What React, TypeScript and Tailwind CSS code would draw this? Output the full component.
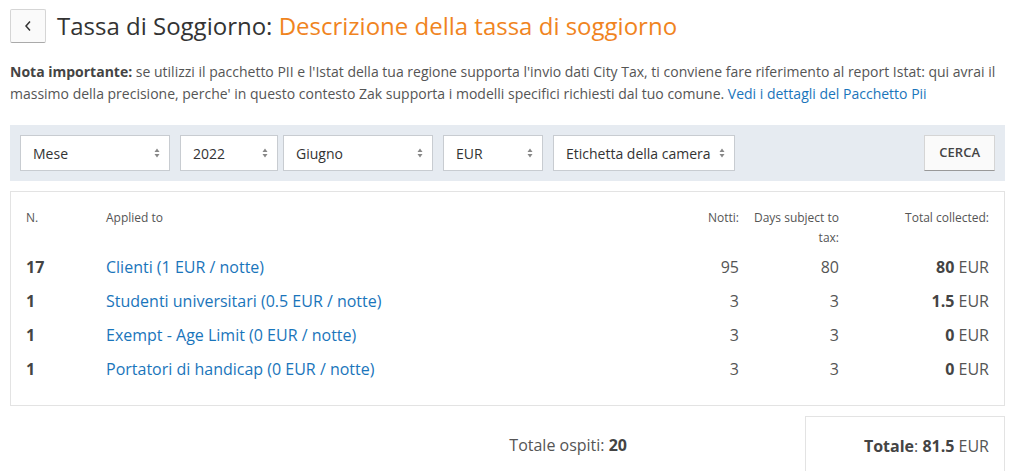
import React from 'react';

const rows = [
  { n: 17, label: 'Clienti (1 EUR / notte)', notti: 95, days: 80, total: '80' },
  { n: 1, label: 'Studenti universitari (0.5 EUR / notte)', notti: 3, days: 3, total: '1.5' },
  { n: 1, label: 'Exempt - Age Limit (0 EUR / notte)', notti: 3, days: 3, total: '0' },
  { n: 1, label: 'Portatori di handicap (0 EUR / notte)', notti: 3, days: 3, total: '0' },
];

function Arrows() {
  return (
    <svg width="6" height="10" viewBox="0 0 6 10" className="shrink-0">
      <path d="M3 0.5 L5.5 4 H0.5 Z" fill="#888" />
      <path d="M3 9.5 L5.5 6 H0.5 Z" fill="#888" />
    </svg>
  );
}

function FakeSelect({ value, className = '' }: { value: string; className?: string }) {
  return (
    <div className={`h-9 bg-white border border-[#c8ccd1] flex items-center justify-between pl-3 pr-[9px] text-[14px] text-[#333] ${className}`}>
      <span>{value}</span>
      <Arrows />
    </div>
  );
}

export default function App() {
  return (
    <div className="w-[1015px] h-[471px] overflow-hidden bg-white px-[10px] font-['Open_Sans',sans-serif] text-[#333]">
      {/* title */}
      <div className="flex items-center gap-[11px] pt-[9px]">
        <button className="w-9 h-[34px] flex items-center justify-center border border-[#d5d5d5] border-b-[#aaa] bg-[#fafafa] rounded-[2px] text-[#333]">
          <svg width="8" height="12" viewBox="0 0 8 12">
            <path d="M6 1.5 L2 6 L6 10.5" stroke="#333" strokeWidth="1.5" fill="none" />
          </svg>
        </button>
        <h1 className="text-[24px] leading-[34px] font-normal text-[#333]">
          Tassa di Soggiorno: <span className="text-[#f0841e]">Descrizione della tassa di soggiorno</span>
        </h1>
      </div>

      {/* note */}
      <p className="mt-[18px] text-[14px] leading-[22px] text-[#555]">
        <b className="font-bold text-[#444]">Nota importante:</b> se utilizzi il pacchetto PII e l'Istat della tua regione supporta l'invio dati City Tax, ti conviene fare riferimento al report Istat: qui avrai il massimo della precisione, perche' in questo contesto Zak supporta i modelli specifici richiesti dal tuo comune.{' '}
        <a className="text-[#1a75bb]">Vedi i dettagli del Pacchetto Pii</a>
      </p>

      {/* filters */}
      <div className="mt-[20px] h-[56px] bg-[#e6ebf1] flex items-center px-[10px]">
        <FakeSelect value="Mese" className="w-[150px]" />
        <FakeSelect value="2022" className="w-[98px] ml-[10px]" />
        <FakeSelect value="Giugno" className="w-[150px] ml-[5px]" />
        <FakeSelect value="EUR" className="w-[100px] ml-[10px]" />
        <FakeSelect value="Etichetta della camera" className="w-[182px] ml-[10px]" />
        <button className="ml-auto h-9 px-[14px] bg-[#fafafa] border border-[#d5d5d5] border-b-[#999] text-[13px] font-semibold text-[#444]">
          CERCA
        </button>
      </div>

      {/* table */}
      <div className="mt-[10px] border border-[#e3e3e3] pl-[15px] pr-[15px] pt-[16px] pb-[19px]">
        <div className="grid grid-cols-[80px_1fr_80px_100px_150px] text-[12px] leading-[20px] text-[#555]">
          <div>N.</div>
          <div>Applied to</div>
          <div className="text-right">Notti:</div>
          <div className="text-right pl-[14px]">Days subject to tax:</div>
          <div className="text-right">Total collected:</div>
        </div>
        <div className="mt-[2px]">
          {rows.map((r, i) => (
            <div key={i} className="grid grid-cols-[80px_1fr_80px_100px_150px] h-[34px] items-center text-[16px] text-[#555]">
              <div className="font-bold text-[#444]">{r.n}</div>
              <div className="text-[#1a75bb]">{r.label}</div>
              <div className="text-right">{r.notti}</div>
              <div className="text-right">{r.days}</div>
              <div className="text-right">
                <b className="font-bold text-[#444]">{r.total}</b> EUR
              </div>
            </div>
          ))}
        </div>
      </div>

      {/* totals */}
      <div className="mt-[10px] flex">
        <div className="flex-1 flex items-center justify-end pr-[178px] text-[16px] text-[#555] h-[58px]">
          Totale ospiti:&nbsp;<b className="font-bold text-[#444]">20</b>
        </div>
        <div className="w-[200px] h-[70px] border border-[#e3e3e3] border-b-0 flex items-start justify-end pt-[17px] pr-[15px] text-[16px] text-[#555]">
          <b className="font-bold text-[#444]">Totale</b>:&nbsp;<b className="font-bold text-[#444]">81.5</b>&nbsp;EUR
        </div>
      </div>
    </div>
  );
}
